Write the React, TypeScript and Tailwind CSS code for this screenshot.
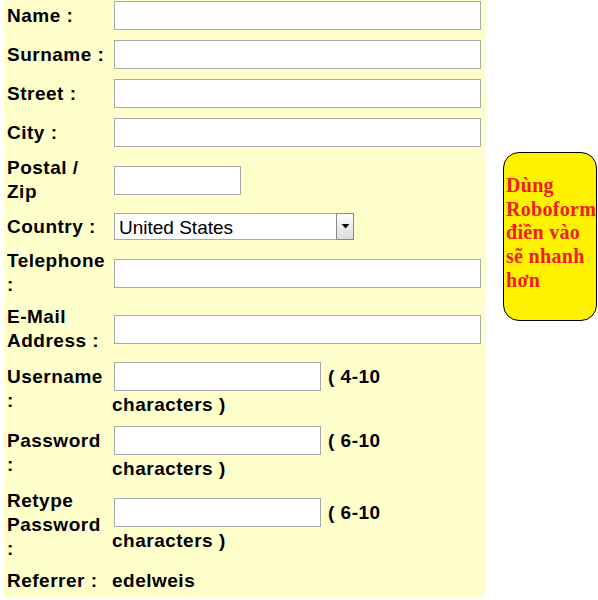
import React from "react";

const labelCls = "text-[19px] leading-[24px] font-bold tracking-[0.5px] text-black";
const inputCls =
  "block h-[29px] my-[1px] mx-[2px] border border-[#a9a9a9] bg-white outline-none text-[19px] px-[3px]";

function TextRow({ label }: { label: string }) {
  return (
    <>
      <div className={labelCls}>{label}</div>
      <input type="text" className={inputCls} />
    </>
  );
}

function HintRow({ label, hint, type = "text" }: { label: string; hint: string; type?: string }) {
  return (
    <>
      <div className={labelCls}>{label}</div>
      <div>
        <div className="flex h-[31px] items-center">
          <input type={type} className={`${inputCls} w-[207px]`} />
          <span className={`${labelCls} ml-[5px]`}>( {hint}</span>
        </div>
        <div className={`${labelCls} pt-[1px]`}>characters )</div>
      </div>
    </>
  );
}

export default function App() {
  return (
    <div className="flex items-start bg-white pl-[4px] w-[598px] h-[600px] font-['Liberation_Sans',Arial,sans-serif]">
      {/* Form */}
      <div className="w-[481px] bg-[#ffffcc] pl-[3px] pr-[2px] pb-[4px]">
        <div className="grid grid-cols-[102px_1fr] gap-x-[3px] gap-y-[8px] items-center">
          <TextRow label="Name :" />
          <TextRow label="Surname :" />
          <TextRow label="Street :" />
          <TextRow label="City :" />

          <div className={labelCls}>Postal / Zip</div>
          <input type="text" className={`${inputCls} w-[127px]`} />

          <div className={labelCls}>Country :</div>
          <div className="relative ml-[2px] my-[1px] h-[27px] w-[240px]">
            <select
              defaultValue="us"
              className="block h-full w-full appearance-none rounded-none border border-[#a9a9a9] bg-white pl-[4px] py-0 text-[19px] text-black outline-none"
            >
              <option value="us">United States</option>
              <option value="ca">Canada</option>
              <option value="vn">Vietnam</option>
            </select>
            <span className="pointer-events-none absolute right-0 top-0 bottom-0 flex w-[18px] items-center justify-center border border-[#8a8a8a] bg-gradient-to-b from-white to-[#dcdcdc]">
              <svg width="9" height="5" viewBox="0 0 9 5">
                <path d="M0.5 0h8L4.5 4.5z" fill="#000" />
              </svg>
            </span>
          </div>

          <TextRow label="Telephone :" />
          <TextRow label="E-Mail Address :" />

          <HintRow label="Username :" hint="4-10" />
          <HintRow label="Password :" hint="6-10" type="password" />
          <HintRow label="Retype Password :" hint="6-10" type="password" />

          <div className={labelCls}>Referrer :</div>
          <div className={labelCls}>edelweis</div>
        </div>
      </div>

      {/* Balloon */}
      <div className="ml-[18px] mt-[152px] h-[169px] w-[94px] rounded-[16px] border border-black bg-[#fff200] pl-[2px] pt-[21px]">
        <p className="font-['Liberation_Serif','Times_New_Roman',serif] text-[20px] leading-[23.7px] font-bold tracking-[0.3px] text-[#ee1d23]">
          Dùng Roboform điền vào sẽ nhanh hơn
        </p>
      </div>
    </div>
  );
}
